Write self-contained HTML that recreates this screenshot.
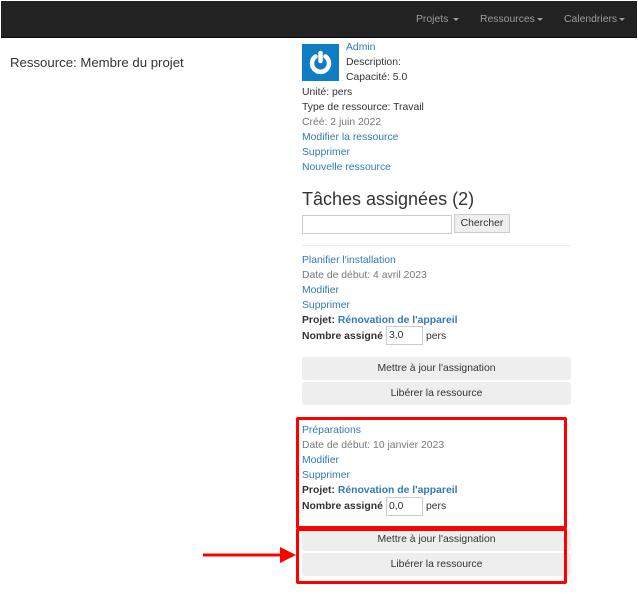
<!DOCTYPE html>
<html><head><meta charset="utf-8"><style>
*{margin:0;padding:0;box-sizing:border-box}
body{width:638px;height:595px;background:#fff;font-family:"Liberation Sans",sans-serif;font-size:10.4px;color:#333;position:relative;overflow:hidden}
.nav{position:absolute;left:1px;top:1px;width:636px;height:37px;background:#222;border-bottom:1px solid #080808}
.nav span{position:absolute;top:13px;color:#9d9d9d;font-size:10.4px}
.a{position:absolute;white-space:nowrap;line-height:15px}
.l{color:#337ab7}.g{color:#777}
.btn{position:absolute;left:302px;width:269px;height:23px;background:#eee;border-radius:3px;text-align:center;line-height:24px;color:#333}
.in{position:absolute;border:1px solid #ccc;background:#fff;height:19px;padding-left:2px;line-height:17px}
.car{display:inline-block;width:0;height:0;border-left:3px solid transparent;border-right:3px solid transparent;border-top:3px solid #9d9d9d;vertical-align:middle;margin-left:2px}
</style></head><body>
<div class="nav">
<span style="left:415px">Projets <i class="car"></i></span>
<span style="left:479px">Ressources<i class="car"></i></span>
<span style="left:563px">Calendriers<i class="car"></i></span>
</div>
<div class="a" style="left:10px;top:55px;font-size:13.2px;color:#333">Ressource: Membre du projet</div>
<div style="position:absolute;left:302px;top:44px;width:37px;height:37px;background:#0f7dc2">
<svg width="37" height="37" viewBox="0 0 37 37"><path d="M13.5 12.5 A8.5 8.5 0 1 0 23.5 12.5" fill="none" stroke="#fff" stroke-width="4.5" stroke-linecap="round"/><line x1="18.5" y1="9" x2="18.5" y2="17" stroke="#fff" stroke-width="4.5" stroke-linecap="round"/></svg>
</div>
<div class="a l" style="left:346px;top:40px">Admin</div>
<div class="a" style="left:346px;top:55px">Description:</div>
<div class="a" style="left:346px;top:70px">Capacité: 5.0</div>
<div class="a" style="left:302px;top:85px">Unité: pers</div>
<div class="a" style="left:302px;top:100px">Type de ressource: Travail</div>
<div class="a g" style="left:302px;top:115px">Créé: 2 juin 2022</div>
<div class="a l" style="left:302px;top:130px">Modifier la ressource</div>
<div class="a l" style="left:302px;top:145px">Supprimer</div>
<div class="a l" style="left:302px;top:160px">Nouvelle ressource</div>
<div class="a" style="left:302px;top:188px;font-size:18px;line-height:22px">Tâches assignées (2)</div>
<div class="in" style="left:302px;top:215px;width:150px"></div>
<div class="in" style="left:454px;top:214px;width:56px;background:#eee;text-align:center;padding:0;height:19px">Chercher</div>
<div style="position:absolute;left:302px;top:245px;width:269px;height:1px;background:#eee"></div>
<div class="a l" style="left:302px;top:253px">Planifier l'installation</div>
<div class="a g" style="left:302px;top:268px">Date de début: 4 avril 2023</div>
<div class="a l" style="left:302px;top:283px">Modifier</div>
<div class="a l" style="left:302px;top:298px">Supprimer</div>
<div class="a" style="left:302px;top:313px"><b>Projet:</b> <b class="l">Rénovation de l'appareil</b></div>
<div class="a" style="left:302px;top:329px"><b>Nombre assigné</b></div>
<div class="in" style="left:386px;top:326px;width:37px">3,0</div>
<div class="a" style="left:426px;top:329px">pers</div>
<div class="btn" style="top:357px">Mettre à jour l'assignation</div>
<div class="btn" style="top:382px">Libérer la ressource</div>
<div class="a l" style="left:302px;top:423px">Préparations</div>
<div class="a g" style="left:302px;top:438px">Date de début: 10 janvier 2023</div>
<div class="a l" style="left:302px;top:453px">Modifier</div>
<div class="a l" style="left:302px;top:468px">Supprimer</div>
<div class="a" style="left:302px;top:483px"><b>Projet:</b> <b class="l">Rénovation de l'appareil</b></div>
<div class="a" style="left:302px;top:499px"><b>Nombre assigné</b></div>
<div class="in" style="left:386px;top:497px;width:37px">0,0</div>
<div class="a" style="left:426px;top:499px">pers</div>
<div class="btn" style="top:528px">Mettre à jour l'assignation</div>
<div class="btn" style="top:553px">Libérer la ressource</div>
<div style="position:absolute;left:296px;top:417px;width:271px;height:112px;border:3px solid #f00;border-radius:2px"></div>
<div style="position:absolute;left:296px;top:528px;width:271px;height:56px;border:3px solid #f00;border-radius:2px"></div>
<svg style="position:absolute;left:200px;top:540px" width="100" height="30"><line x1="3" y1="15" x2="82" y2="15" stroke="#f00" stroke-width="3"/><polygon points="80,7 96,15 80,23" fill="#f00"/></svg>
</body></html>
